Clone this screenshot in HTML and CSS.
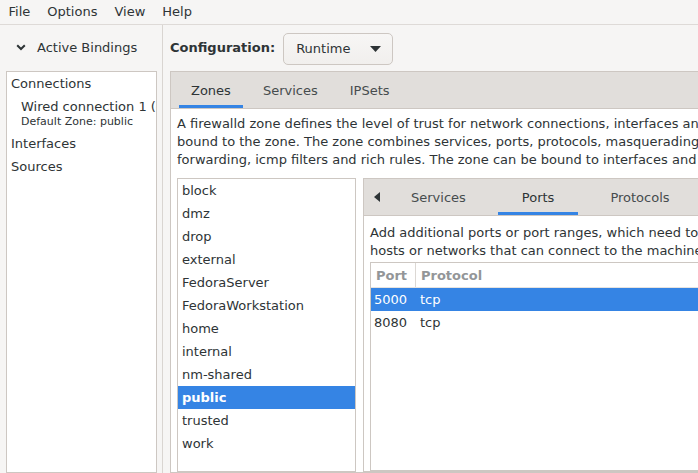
FILE: index.html
```html
<!DOCTYPE html>
<html>
<head>
<meta charset="utf-8">
<title>Firewall Configuration</title>
<link rel="stylesheet" href="styles.css">
</head>
<body>
<div class="window">
  <nav class="menubar">
    <span class="menu-item">File</span>
    <span class="menu-item">Options</span>
    <span class="menu-item">View</span>
    <span class="menu-item">Help</span>
  </nav>
  <div class="main">
    <aside class="sidebar">
      <div class="sidebar-head">
        <svg class="chevron" width="10" height="7" viewBox="0 0 10 7"><path d="M1.2 1.2 L5 5 L8.8 1.2" fill="none" stroke="#2e3436" stroke-width="2"/></svg>
        <span>Active Bindings</span>
      </div>
      <div class="bindings">
        <div class="b-row">Connections</div>
        <div class="b-conn">
          <div class="b-conn-name">Wired connection 1 (enp1s0)</div>
          <div class="b-conn-zone">Default Zone: public</div>
        </div>
        <div class="b-row">Interfaces</div>
        <div class="b-row">Sources</div>
      </div>
    </aside>
    <section class="content">
      <div class="config-row">
        <span class="config-label">Configuration:</span>
        <div class="dropdown">
          <span>Runtime</span>
          <svg class="drop-arrow" width="11" height="6" viewBox="0 0 11 6"><path d="M0 0 H11 L5.5 6 Z" fill="#2e3436"/></svg>
        </div>
      </div>
      <div class="notebook">
        <div class="tabs">
          <div class="tab active">Zones</div>
          <div class="tab">Services</div>
          <div class="tab">IPSets</div>
        </div>
        <div class="page">
          <p class="desc">
            <span>A firewalld zone defines the level of trust for network connections, interfaces and source addresses</span>
            <span>bound to the zone. The zone combines services, ports, protocols, masquerading, port/packet</span>
            <span>forwarding, icmp filters and rich rules. The zone can be bound to interfaces and source addresses.</span>
          </p>
          <div class="zone-pane">
            <ul class="zone-list">
              <li>block</li>
              <li>dmz</li>
              <li>drop</li>
              <li>external</li>
              <li>FedoraServer</li>
              <li>FedoraWorkstation</li>
              <li>home</li>
              <li>internal</li>
              <li>nm-shared</li>
              <li class="selected">public</li>
              <li>trusted</li>
              <li>work</li>
            </ul>
            <div class="subnotebook">
              <div class="tabs sub-tabs">
                <div class="scroll-arrow"><svg width="6" height="10" viewBox="0 0 6 10"><path d="M6 0 V10 L0 5 Z" fill="#2e3436"/></svg></div>
                <div class="tab">Services</div>
                <div class="tab active">Ports</div>
                <div class="tab">Protocols</div>
                <div class="tab">Source Ports</div>
              </div>
              <div class="subpage">
                <p class="desc">
                  <span>Add additional ports or port ranges, which need to be accessible for all</span>
                  <span>hosts or networks that can connect to the machine.</span>
                </p>
                <div class="ports">
                  <div class="ports-head">
                    <span class="h-port">Port</span>
                    <span class="h-proto">Protocol</span>
                  </div>
                  <div class="ports-row selected">
                    <span class="c-port">5000</span>
                    <span class="c-proto">tcp</span>
                  </div>
                  <div class="ports-row">
                    <span class="c-port">8080</span>
                    <span class="c-proto">tcp</span>
                  </div>
                </div>
              </div>
            </div>
          </div>
        </div>
      </div>
    </section>
  </div>
</div>
</body>
</html>
```
FILE: styles.css
```css
* { box-sizing: border-box; }

html, body {
  margin: 0;
  padding: 0;
  width: 698px;
  height: 473px;
  overflow: hidden;
  background: #f6f5f4;
}

body {
  font-family: "DejaVu Sans", sans-serif;
  font-size: 13px;
  color: #2e3436;
}

.window {
  display: flex;
  flex-direction: column;
  height: 473px;
}

.menubar {
  height: 25px;
  border-bottom: 1px solid #dedad7;
  display: flex;
  align-items: center;
  flex-shrink: 0;
}

.menu-item {
  padding: 0 8.5px;
  line-height: 16px;
}

.main {
  flex: 1;
  display: flex;
  min-height: 0;
}

.sidebar {
  width: 163px;
  flex-shrink: 0;
  border-right: 1px solid #d9d5d1;
  display: flex;
  flex-direction: column;
}

.sidebar-head {
  height: 46px;
  flex-shrink: 0;
  display: flex;
  align-items: center;
  padding: 0 0 2px 16px;
}

.chevron {
  display: block;
  margin-right: 11px;
}

.bindings {
  flex: 1;
  margin-left: 6px;
  width: 151px;
  background: #ffffff;
  border: 1px solid #cdc7c2;
  overflow: hidden;
  white-space: nowrap;
}

.b-row {
  height: 23px;
  line-height: 23px;
  padding-left: 4px;
}

.b-conn {
  height: 37px;
  padding: 4px 0 0 14px;
}

.b-conn-name {
  line-height: 16px;
}

.b-conn-zone {
  font-size: 11px;
  line-height: 14px;
}

.content {
  flex: 1;
  min-width: 0;
  padding-left: 7px;
  overflow: hidden;
  display: flex;
  flex-direction: column;
}

.config-row {
  height: 46px;
  flex-shrink: 0;
  display: flex;
  align-items: center;
}

.config-label {
  font-weight: bold;
  margin-right: 8px;
  padding-bottom: 1px;
}

.dropdown {
  width: 110px;
  height: 32px;
  border: 1px solid #cdc7c2;
  border-radius: 5px;
  background: linear-gradient(#f7f6f5, #f1efed);
  display: flex;
  align-items: center;
  padding: 0 11px 0 12px;
  margin-top: 1px;
}

.dropdown span {
  flex: 1;
  padding-bottom: 1px;
}

.drop-arrow {
  display: block;
}

.notebook {
  width: 720px;
  flex: 1;
  border: 1px solid #cdc7c2;
  background: #ffffff;
  display: flex;
  flex-direction: column;
}

.tabs {
  height: 37px;
  flex-shrink: 0;
  background: #e1dedb;
  border-bottom: 1px solid #cdc7c2;
  display: flex;
  padding-left: 8px;
  white-space: nowrap;
}

.tab {
  padding: 0 12px;
  margin-right: 8px;
  display: flex;
  align-items: center;
  color: #464c4e;
}

.tab.active {
  color: #2e3436;
  box-shadow: inset 0 -3px 0 #3584e4;
}

.page {
  flex: 1;
  padding: 6px 6px 0 6px;
  display: flex;
  flex-direction: column;
  min-height: 0;
}

.desc {
  margin: 0;
  line-height: 18px;
  white-space: nowrap;
}

.desc span {
  display: block;
}

.zone-pane {
  flex: 1;
  margin-top: 9px;
  display: flex;
  gap: 7px;
}

.zone-list {
  margin: 0;
  padding: 0;
  list-style: none;
  width: 179px;
  flex-shrink: 0;
  border: 1px solid #cdc7c2;
  background: #ffffff;
}

.zone-list li {
  height: 23px;
  line-height: 23px;
  padding-left: 4px;
}

.zone-list li.selected {
  background: #3584e4;
  color: #ffffff;
  font-weight: bold;
}

.subnotebook {
  flex: 1;
  border: 1px solid #cdc7c2;
  display: flex;
  flex-direction: column;
}

.sub-tabs {
  padding-left: 0;
}

.scroll-arrow {
  width: 23px;
  display: flex;
  align-items: center;
  padding-left: 10px;
}

.scroll-arrow svg {
  display: block;
}

.sub-tabs .tab {
  padding: 0 24px;
}

.subpage {
  flex: 1;
  padding: 8px 0 0 6px;
  display: flex;
  flex-direction: column;
}

.ports {
  flex: 1;
  margin-top: 2px;
  border: 1px solid #cdc7c2;
  border-right: none;
  background: #ffffff;
}

.ports-head {
  height: 25px;
  display: flex;
  align-items: center;
  border-bottom: 1px solid #e6e3e0;
  font-weight: bold;
  color: #939698;
}

.h-port {
  width: 45px;
  height: 100%;
  display: flex;
  align-items: center;
  padding-left: 5px;
  border-right: 1px solid #dcd8d4;
}

.h-proto {
  padding-left: 5px;
}

.ports-row {
  height: 23px;
  display: flex;
  align-items: center;
}

.ports-row.selected {
  background: #3584e4;
  color: #ffffff;
}

.c-port {
  width: 45px;
  padding-left: 3px;
}

.c-proto {
  padding-left: 4px;
}
```
